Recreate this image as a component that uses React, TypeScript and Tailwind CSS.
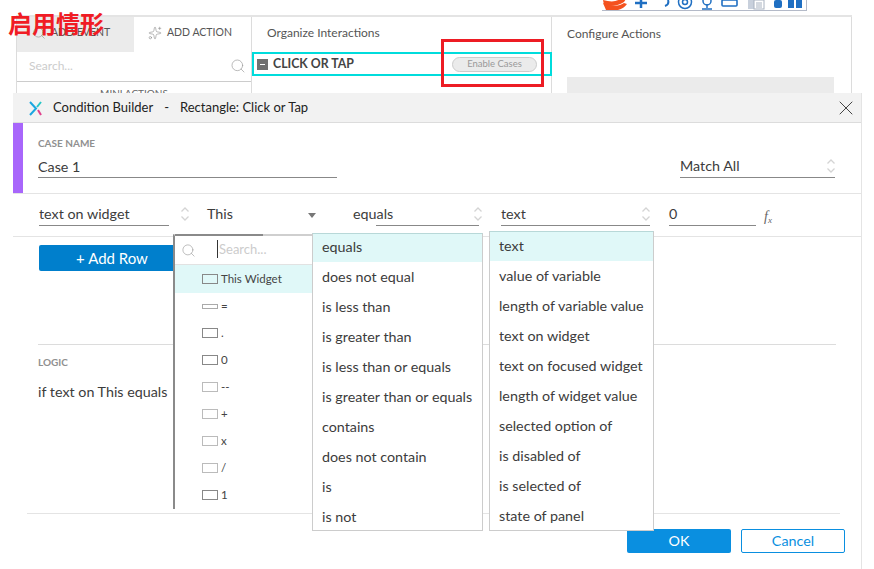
import { Search, X, Sparkles } from "lucide-react";

const OPERATORS = [
  "equals",
  "does not equal",
  "is less than",
  "is greater than",
  "is less than or equals",
  "is greater than or equals",
  "contains",
  "does not contain",
  "is",
  "is not",
];

const TARGETS = [
  "text",
  "value of variable",
  "length of variable value",
  "text on widget",
  "text on focused widget",
  "length of widget value",
  "selected option of",
  "is disabled of",
  "is selected of",
  "state of panel",
];

const WIDGETS = ["=", ".", "0", "--", "+", "x", "/", "1"];

function Updown({ className = "" }: { className?: string }) {
  return (
    <svg width="10" height="16" viewBox="0 0 10 16" fill="none" stroke="#d4d4d4" strokeWidth="1.3" className={className}>
      <path d="M1.5 5.5 5 2l3.5 3.5M1.5 10.5 5 14l3.5-3.5" />
    </svg>
  );
}

function Toolbar() {
  return (
    <div className="ml-[602px] flex h-[11px] w-[205px] items-end overflow-hidden border-r border-b border-[#b4bac8] bg-white">
      <svg width="204" height="10" viewBox="0 0 204 10" fill="none">
        <path d="M2 5c6 2 14 1 20-3l2-3h-6C14 2 8 2 1 0z" fill="#f4511e" />
        <path d="M1 3l3 7h12c4-1 7-3 9-6l-3-1c-4 3-12 4-21 0z" fill="#f4511e" />
        <path d="M39 0v8M33 3h12" stroke="#1f6fc2" strokeWidth="2.5" />
        <path d="M66 0c1 3 0 5-3 6" stroke="#1f6fc2" strokeWidth="2" />
        <circle cx="83" cy="2" r="6.5" stroke="#1f6fc2" strokeWidth="1.5" />
        <circle cx="83" cy="2" r="2.5" stroke="#1f6fc2" strokeWidth="1.5" />
        <path d="M105 4v4M100 9h10" stroke="#1f6fc2" strokeWidth="1.5" />
        <circle cx="105" cy="1" r="4" stroke="#1f6fc2" strokeWidth="1.5" />
        <rect x="120" y="0" width="15" height="6" rx="1" stroke="#1f6fc2" strokeWidth="1.6" />
        <rect x="146" y="0" width="9" height="9" fill="#c8d0dc" />
        <rect x="152" y="0" width="10" height="9" fill="#fff" stroke="#a8b2c0" />
        <path d="M154 3h6M154 5h6M154 7h6" stroke="#a8b2c0" />
        <rect x="172" y="0" width="8" height="8" rx="2" fill="#1f6fc2" />
        <rect x="186" y="0" width="6" height="8" fill="#1f6fc2" />
        <rect x="194" y="0" width="6" height="8" fill="#1f6fc2" />
      </svg>
    </div>
  );
}

function InteractionsPanel() {
  return (
    <div className="ml-4 mt-1 flex h-[90px] w-[836px] border-t-2 border-[#e4e4e4] text-[#555]">
      <div className="w-[236px] border-x border-[#dcdcdc]">
        <div className="flex h-[35px] pb-[3px] text-[10.5px]">
          <div className="-mb-[3px] flex w-[117px] items-center gap-[5px] bg-[#ebebeb] pb-[3px] pl-[15px]">
            <Search className="h-3.5 w-3.5 text-[#888]" strokeWidth={1} />
            <span>ADD EVENT</span>
          </div>
          <div className="flex items-center gap-[5px] pl-[14px]">
            <Sparkles className="h-3.5 w-3.5 text-[#888]" strokeWidth={1} />
            <span>ADD ACTION</span>
          </div>
        </div>
        <div className="flex h-[30px] items-center justify-between border-b border-[#ccc] pb-[2px] pl-3 pr-[5px] text-xs text-[#ccc]">
          <span>Search...</span>
          <Search className="h-4 w-4 text-[#999]" strokeWidth={1} />
        </div>
        <div className="pt-1 text-center text-[10px] leading-[14px] text-[#666]">MINI ACTIONS</div>
      </div>
      <div className="w-[300px] border-r border-[#dcdcdc]">
        <div className="flex h-[35px] items-center pb-[3px] pl-[15px] text-xs">Organize Interactions</div>
        <div className="flex h-6 w-[300px] items-center border-2 border-[#00dcdc] pl-[3px] pr-[13px]">
          <span className="flex h-[11px] w-[11px] items-center justify-center bg-[#707070]">
            <span className="h-px w-[5px] bg-white" />
          </span>
          <span className="ml-[5px] text-[12.3px] font-bold text-[#444]">CLICK OR TAP</span>
          <span className="ml-auto mt-px flex h-[15px] w-[85px] items-center justify-center rounded-full border border-[#ccc] bg-[#ebebeb] text-[9.5px] text-[#999]">
            Enable Cases
          </span>
        </div>
      </div>
      <div className="w-[300px] border-r border-[#dcdcdc] pl-[15px]">
        <div className="flex h-[60px] pt-[9px] text-xs">Configure Actions</div>
        <div className="h-[30px] w-[267px] bg-[#ebebeb]" />
      </div>
    </div>
  );
}

function WidgetPicker() {
  return (
    <div className="absolute left-[160px] top-[141px] h-[275px] w-[140px] border-l-2 border-t-2 border-l-[#8a8a8a] border-t-[#cfcfcf] bg-white">
      <span className="absolute -top-[2px] left-0 h-[2px] w-[88px] bg-[#8a8a8a]" />
      <div className="flex h-[29px] items-center border-b border-[#e2e2e2] pl-[6px]">
        <Search className="h-[15px] w-[15px] text-[#999]" strokeWidth={1} />
        <span className="mb-[2px] ml-[21px] border-l border-[#333] pl-px text-[13px] leading-[18px] text-[#ccc]">Search...</span>
      </div>
      <div className="flex h-[28px] items-center bg-[#e0f8f8] pl-[27px] text-[11.5px] text-[#444]">
        <span className="mr-[3px] h-[10px] w-4 border border-[#888]" />
        This Widget
      </div>
      {WIDGETS.map((w, i) => (
        <div key={w} className="flex h-[27px] items-center pb-px pl-[27px] text-[11.5px] text-[#444]">
          <span
            className={
              i === 0
                ? "mr-[3px] h-[5px] w-4 border border-[#aaa]"
                : i === 1 || i === 2 || i === 7
                  ? "mr-[3px] h-[10px] w-4 border border-[#888]"
                  : "mr-[3px] h-[10px] w-4 border border-[#bbb]"
            }
          />
          {w}
        </div>
      ))}
    </div>
  );
}

function OptionList({ items, className, firstRow }: { items: string[]; className: string; firstRow: string }) {
  return (
    <div className={className}>
      {items.map((item, i) => (
        <div
          key={item}
          className={
            i === 0
              ? `flex items-center bg-[#e0f8f8] pl-[9px] ${firstRow}`
              : "flex h-[30px] shrink-0 items-center pl-[9px]"
          }
        >
          {item}
        </div>
      ))}
    </div>
  );
}

function ConditionBuilder() {
  return (
    <div className="absolute left-[13px] top-[93px] h-[476px] w-[849px] border-r border-[#e4e4e4] bg-white text-[14.3px] text-[#3c3c3c]">
      <div className="flex h-[30px] items-center border-b border-[#dcdcdc] bg-[#f2f2f2] pl-4 pt-px text-[13px] text-[#222]">
        <svg width="13" height="15" viewBox="0 0 13 15" fill="none" strokeWidth="2">
          <path d="M1 1l6 6.5L1 14" stroke="#1ba6e0" />
          <path d="M12 1L8 6" stroke="#25c6c6" />
          <path d="M9 9l3 5" stroke="#e0408c" />
        </svg>
        <span className="ml-[11px]">Condition Builder</span>
        <span className="ml-[11px]">-</span>
        <span className="ml-[11px]">Rectangle: Click or Tap</span>
        <X className="ml-auto mr-[3px] h-6 w-6 text-[#444]" strokeWidth={1} />
      </div>

      <div className="flex h-[71px] border-b border-[#e4e4e4]">
        <div className="h-[70px] w-[10px] bg-[#a866fb]" />
        <div className="ml-[15px] w-[299px]">
          <div className="pt-[14px] text-[10px] font-bold leading-3 text-[#909090]">CASE NAME</div>
          <div className="mt-[5px] h-[24px] border-b border-[#888] pt-[3px] leading-5">Case 1</div>
        </div>
        <div className="ml-[343px] mt-[31px] flex h-[24px] w-[155px] items-end justify-between border-b border-[#888] pb-px">
          <span className="leading-5">Match All</span>
          <Updown className="mb-[2px] mr-[-1px]" />
        </div>
      </div>

      <div className="flex h-[43px] items-start border-b border-[#e4e4e4] pl-[26px] pt-[10px]">
        <div className="h-[22px] w-[130px] border-b border-[#888] leading-5">text on widget</div>
        <Updown className="ml-[11px] mt-[2px]" />
        <div className="relative ml-[17px] w-[112px] leading-5">
          This
          <span className="absolute right-[3px] top-[9px] h-0 w-0 border-x-4 border-t-[5px] border-x-transparent border-t-[#777]" />
        </div>
        <div className="relative ml-[34px] flex h-[22px] w-[126px] justify-between leading-5">
          <span>equals</span>
          <span className="absolute bottom-0 left-[23px] right-0 h-px bg-[#888]" />
          <Updown className="mr-[-4px] mt-[2px]" />
        </div>
        <div className="ml-[22px] flex h-[22px] w-[149px] justify-between border-b border-[#888] leading-5">
          <span>text</span>
          <Updown className="mr-[-1px] mt-[2px]" />
        </div>
        <div className="ml-[19px] h-[22px] w-[87px] border-b border-[#888] leading-5">0</div>
        <span className="ml-2 mt-[2px] font-['Liberation_Serif',serif] text-[14px] italic text-[#666]">
          f<sub className="text-[9px]">x</sub>
        </span>
      </div>

      <div className="ml-[26px] mt-2 flex h-[26px] w-[146px] items-center justify-center rounded-[2px] bg-[#007fcc] text-[15px] text-white">
        + Add Row
      </div>

      <div className="ml-[25px] mt-[73px] h-[169px] w-[798px] border-t border-[#dcdcdc]">
        <div className="pt-[11px] text-[10px] font-bold leading-3 text-[#909090]">LOGIC</div>
        <div className="mt-[14px] leading-5">if text on This equals</div>
      </div>

      <div className="ml-[14px] w-[813px] border-t border-[#e4e4e4] pt-[15px]">
        <div className="flex justify-end gap-[10px]">
          <div className="flex h-6 w-[104px] items-center justify-center rounded-[2px] bg-[#0a8fe0] text-white">OK</div>
          <div className="-mr-[5px] flex h-6 w-[104px] items-center justify-center rounded-[2px] border border-[#0a8fe0] text-[#0a8fe0]">
            Cancel
          </div>
        </div>
      </div>

      <WidgetPicker />
      <OptionList
        items={OPERATORS}
        firstRow="h-[28px] shrink-0 pb-[2px]"
        className="absolute left-[299px] top-[140px] flex h-[298px] w-[171px] flex-col overflow-hidden border border-[#ccc] border-t-[#b8d8d8] bg-white"
      />
      <OptionList
        items={TARGETS}
        firstRow="h-[29px] shrink-0 pb-px"
        className="absolute left-[476px] top-[138px] flex h-[300px] w-[165px] flex-col overflow-hidden border border-[#ccc] border-t-[#b8d8d8] bg-white"
      />
    </div>
  );
}

export default function App() {
  return (
    <div className="relative h-[569px] w-[874px] overflow-hidden bg-white font-['Lato',sans-serif]">
      <Toolbar />
      <InteractionsPanel />
      <ConditionBuilder />
      <span className="absolute left-2 top-[5px] font-['Noto_Sans_CJK_SC',sans-serif] text-2xl font-bold leading-9 text-[#f01c24]">
        启用情形
      </span>
      <div className="absolute left-[441px] top-[39px] h-[48px] w-[103px] border-[3px] border-[#ed1c24]" />
    </div>
  );
}
